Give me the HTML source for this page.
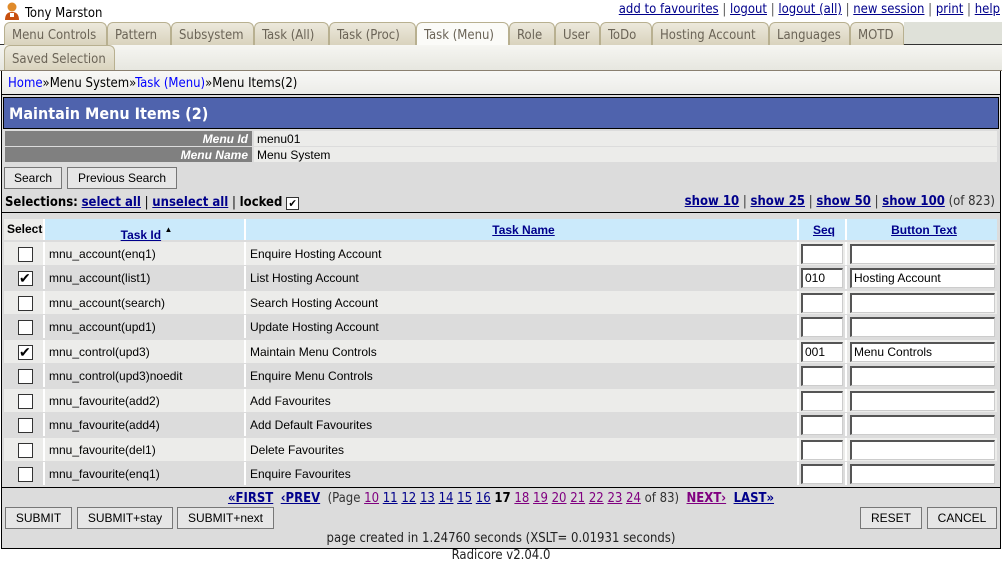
<!DOCTYPE html>
<html><head><meta charset="utf-8"><style>
*{box-sizing:border-box;margin:0;padding:0}
body{width:1002px;height:562px;background:#fff;font-family:"DejaVu Sans Condensed","DejaVu Sans",sans-serif;font-size:13px;color:#000;position:relative;overflow:hidden}
.a{position:absolute}
a{color:#00008b;text-decoration:underline}
.tab{position:absolute;top:22px;height:23px;background:linear-gradient(#ece9dc,#d9d3bd);border:1px solid #b8b090;border-bottom:none;border-radius:6px 6px 0 0;color:#6b6457;font-size:13px;line-height:25px;padding-left:7px;white-space:nowrap}
.sans{font-family:"Liberation Sans",Arial,sans-serif;font-size:12px}
.btn{position:absolute;height:22px;background:#e6e6e6;border:1px solid #777;font-family:"Liberation Sans",Arial,sans-serif;font-size:12px;line-height:20px;text-align:center}
.row{position:absolute;left:4px;width:993px;height:23px}
.c{position:absolute;top:0;height:23px;line-height:24px;font-family:"Liberation Sans",Arial,sans-serif;font-size:12px;padding-left:4px}
.cb{position:absolute;left:14px;top:4px;width:15px;height:15px;border:1px solid #333;background:#fff}
.in{position:absolute;top:2px;height:20px;background:#fff;border:1px solid #777;border-right-color:#ccc;border-bottom-color:#ccc;border-top:2px solid #555;border-left:2px solid #555;font-size:12px;line-height:17px;padding-left:2px}
</style></head><body>
<div class="a" style="left:4px;top:2px;width:16px;height:18px"><svg width="16" height="18"><circle cx="8" cy="5" r="4.5" fill="#e08a2a"/><path d="M1 18 Q1 10 8 10 Q15 10 15 18Z" fill="#c8500f"/><rect x="6" y="11" width="4" height="4" fill="#fff"/></svg></div>
<div class="a" style="left:25px;top:6px;font-size:13px">Tony Marston</div>
<div class="a" style="right:2px;top:2px;font-size:13px;color:#555"><a href="#">add to favourites</a> | <a href="#">logout</a> | <a href="#">logout (all)</a> | <a href="#">new session</a> | <a href="#">print</a> | <a href="#">help</a></div>
<div class="a" style="left:904px;top:22px;width:98px;height:23px;background:#dfe1d9"></div>
<div class="a" style="left:0;top:44px;width:1002px;height:1px;background:#333"></div>
<div class="tab" style="left:4px;width:103px">Menu Controls</div>
<div class="tab" style="left:107px;width:64px">Pattern</div>
<div class="tab" style="left:171px;width:83px">Subsystem</div>
<div class="tab" style="left:254px;width:75px">Task (All)</div>
<div class="tab" style="left:329px;width:87px">Task (Proc)</div>
<div class="tab" style="left:416px;width:93px;background:#fbfbf8;height:24px">Task (Menu)</div>
<div class="tab" style="left:509px;width:46px">Role</div>
<div class="tab" style="left:555px;width:45px">User</div>
<div class="tab" style="left:600px;width:52px">ToDo</div>
<div class="tab" style="left:652px;width:117px">Hosting Account</div>
<div class="tab" style="left:769px;width:81px">Languages</div>
<div class="tab" style="left:850px;width:54px">MOTD</div>
<div class="a" style="left:0;top:45px;width:1002px;height:26px;background:linear-gradient(#f6f6f2,#e6e6df)"></div>
<div class="tab" style="left:4px;top:45px;width:111px;height:26px;line-height:28px">Saved Selection</div>
<div class="a" style="left:0;top:70px;width:1002px;height:1px;background:#8a8070"></div>
<div class="a" style="left:1px;top:71px;width:1000px;height:478px;border:1px solid #000;border-top:none;background:#dcdcdc"></div>
<div class="a" style="left:2px;top:71px;width:998px;height:24px;background:linear-gradient(#f8f8f6,#ecece8);border-bottom:1px solid #000"></div>
<div class="a" style="left:8px;top:76px"><a href="#" style="color:#00f;text-decoration:none">Home</a>»Menu System»<a href="#" style="color:#00f;text-decoration:none">Task (Menu)</a>»Menu Items(2)</div>
<div class="a" style="left:3px;top:97px;width:996px;height:32px;background:#4f63ad;border:1px solid #000;color:#fff;font-weight:bold;font-size:16px;line-height:32px;padding-left:5px">Maintain Menu Items (2)</div>
<div class="a" style="left:5px;top:131px;width:247px;height:15px;background:#808080;color:#fff;font:italic bold 12px 'Liberation Sans',sans-serif;text-align:right;padding-right:4px;line-height:16px">Menu Id</div>
<div class="a sans" style="left:254px;top:131px;width:743px;height:15px;background:#ececea;line-height:16px;padding-left:3px">menu01</div>
<div class="a" style="left:5px;top:147px;width:247px;height:15px;background:#808080;color:#fff;font:italic bold 12px 'Liberation Sans',sans-serif;text-align:right;padding-right:4px;line-height:16px">Menu Name</div>
<div class="a sans" style="left:254px;top:147px;width:743px;height:15px;background:#ececea;line-height:16px;padding-left:3px">Menu System</div>
<div class="btn" style="left:4px;top:167px;width:58px">Search</div>
<div class="btn" style="left:67px;top:167px;width:110px">Previous Search</div>
<div class="a" style="left:5px;top:195px;color:#000"><b>Selections:</b> <a href="#" style="font-weight:bold">select all</a> | <a href="#" style="font-weight:bold">unselect all</a> | <b>locked</b> <span style="display:inline-block;width:13px;height:13px;border:1px solid #333;background:#fff;font-size:11px;line-height:11px;text-align:center;vertical-align:-1px">✔</span></div>
<div class="a" style="right:7px;top:194px;color:#333"><a href="#" style="font-weight:bold">show 10</a> | <a href="#" style="font-weight:bold">show 25</a> | <a href="#" style="font-weight:bold">show 50</a> | <a href="#" style="font-weight:bold">show 100</a> (of 823)</div>
<div class="a" style="left:2px;top:212px;width:998px;height:1px;background:#000"></div>
<div class="row" style="top:219px;height:21px;background:#fff">
<div class="c" style="left:0;width:39px;background:#ececea;font-weight:bold;padding-left:3px;height:21px;line-height:21px">Select</div>
<div class="c" style="left:41px;width:199px;background:#cbeafb;text-align:center;height:21px;line-height:22px"><a href="#" style="font-weight:bold">Task Id</a> <span style="font-size:8px;vertical-align:7px">▲</span></div>
<div class="c" style="left:242px;width:551px;background:#cbeafb;text-align:center;height:21px;line-height:22px"><a href="#" style="font-weight:bold">Task Name</a></div>
<div class="c" style="left:795px;width:46px;background:#cbeafb;text-align:center;height:21px;line-height:22px"><a href="#" style="font-weight:bold">Seq</a></div>
<div class="c" style="left:843px;width:150px;background:#cbeafb;text-align:center;height:21px;line-height:22px"><a href="#" style="font-weight:bold">Button Text</a></div>
</div>
<div id="rows"></div>
<script>
var d=[["mnu_account(enq1)","Enquire Hosting Account",0,"",""],["mnu_account(list1)","List Hosting Account",1,"010","Hosting Account"],["mnu_account(search)","Search Hosting Account",0,"",""],["mnu_account(upd1)","Update Hosting Account",0,"",""],["mnu_control(upd3)","Maintain Menu Controls",1,"001","Menu Controls"],["mnu_control(upd3)noedit","Enquire Menu Controls",0,"",""],["mnu_favourite(add2)","Add Favourites",0,"",""],["mnu_favourite(add4)","Add Default Favourites",0,"",""],["mnu_favourite(del1)","Delete Favourites",0,"",""],["mnu_favourite(enq1)","Enquire Favourites",0,"",""]];
var h="";
d.forEach(function(r,i){var t=242+Math.round(i*24.45);var bg=i%2?"#dcdcdc":"#ececea";
h+='<div class="row" style="top:'+t+'px;background:#fff"><div class="c" style="left:0;width:39px;background:'+bg+'"><div class="cb" style="left:14px;top:5px">'+(r[2]?'<span style="position:absolute;left:0;top:-3px;font-size:14px;line-height:18px">✔</span>':'')+'</div></div><div class="c" style="left:41px;width:199px;background:'+bg+'">'+r[0]+'</div><div class="c" style="left:242px;width:551px;background:'+bg+'">'+r[1]+'</div><div class="c" style="left:795px;width:46px;background:'+bg+'"><div class="in" style="left:2px;width:42px">'+r[3]+'</div></div><div class="c" style="left:843px;width:150px;background:'+bg+'"><div class="in" style="left:3px;width:145px">'+r[4]+'</div></div></div>';});
document.getElementById("rows").innerHTML=h;
</script>
<div class="a" style="left:2px;top:487px;width:998px;height:1px;background:#000"></div>
<div class="a" style="left:0;top:491px;width:1002px;text-align:center;color:#333;font-size:13px"><a href="#" style="font-weight:bold">«FIRST</a>&nbsp; <a href="#" style="font-weight:bold">‹PREV</a>&nbsp; (Page <a href="#" style="color:#800080">10</a> <a href="#">11</a> <a href="#">12</a> <a href="#">13</a> <a href="#">14</a> <a href="#">15</a> <a href="#">16</a> <b style="color:#000">17</b> <a href="#" style="color:#800080">18</a> <a href="#" style="color:#800080">19</a> <a href="#" style="color:#800080">20</a> <a href="#" style="color:#800080">21</a> <a href="#" style="color:#800080">22</a> <a href="#" style="color:#800080">23</a> <a href="#" style="color:#800080">24</a> of 83)&nbsp; <a href="#" style="font-weight:bold;color:#800080">NEXT›</a>&nbsp; <a href="#" style="font-weight:bold">LAST»</a></div>
<div class="btn" style="left:5px;top:507px;width:67px">SUBMIT</div>
<div class="btn" style="left:77px;top:507px;width:96px">SUBMIT+stay</div>
<div class="btn" style="left:177px;top:507px;width:97px">SUBMIT+next</div>
<div class="btn" style="left:860px;top:507px;width:62px">RESET</div>
<div class="btn" style="left:927px;top:507px;width:70px">CANCEL</div>
<div class="a" style="left:2px;top:531px;width:998px;text-align:center;color:#222">page created in 1.24760 seconds (XSLT= 0.01931 seconds)</div>
<div class="a" style="left:0;top:548px;width:1002px;text-align:center;color:#222">Radicore v2.04.0</div>
</body></html>
